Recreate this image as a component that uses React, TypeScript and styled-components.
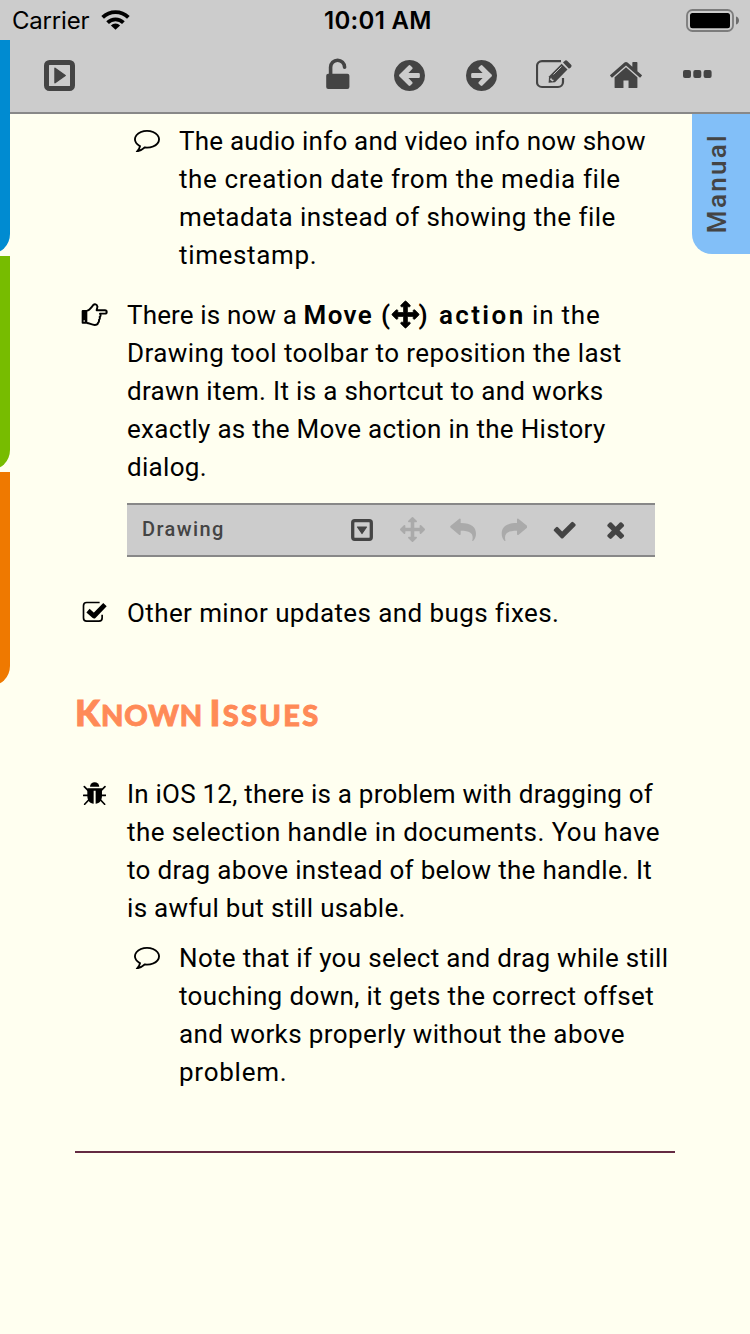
import React from 'react';
import styled, { createGlobalStyle, css } from 'styled-components';

const ink = '#444';
const paper = '#fffff0';
const chrome = '#ccc';
const edge = '#888';

const GlobalStyle = createGlobalStyle`
  * { box-sizing: border-box; }
  body {
    margin: 0;
    background: ${paper};
    color: #000;
    font-family: Roboto, 'Liberation Sans', sans-serif;
  }
  svg { display: block; flex: none; }
`;

const Screen = styled.div`
  position: relative;
  display: flex;
  flex-direction: column;
  width: 750px;
  height: 1334px;
  overflow: hidden;
  background: ${paper};
`;

const StatusBar = styled.header`
  display: grid;
  grid-template-columns: 324px 1fr auto;
  align-items: center;
  height: 40px;
  padding-right: 11px;
  background: ${chrome};
  font: 400 24px/38px Inter, 'Liberation Sans', sans-serif;
`;

const Carrier = styled.div`
  display: flex;
  align-items: center;
  gap: 12px;
  padding: 2px 0 0 12px;
  letter-spacing: -0.2px;
  svg { margin-top: -2px; }
`;

const Clock = styled.div`
  padding-top: 2px;
  font-weight: 600;
  letter-spacing: 0.3px;
`;

const Toolbar = styled.nav`
  display: flex;
  align-items: center;
  height: 74px;
  padding: 0 17px 2px 23px;
  border-bottom: 2px solid ${edge};
  background: ${chrome};
  color: ${ink};
`;

const ToolButton = styled.button<{ $lift?: number; $right?: number }>`
  display: flex;
  align-items: center;
  justify-content: center;
  width: 72px;
  height: 68px;
  padding: 0 0 ${(p) => p.$lift ?? 0}px ${(p) => p.$right ?? 0}px;
  border: 0;
  background: none;
  color: inherit;
`;

const Spacer = styled.div`
  flex: 1;
`;

const SideTabs = styled.aside`
  position: absolute;
  top: 40px;
  left: 0;
  display: flex;
  flex-direction: column;
  gap: 2px;
  width: 10px;
  overflow: hidden;
`;

const SideTab = styled.div<{ $color: string }>`
  align-self: flex-end;
  width: 40px;
  height: 214px;
  border-bottom-right-radius: 20px;
  background: ${(p) => p.$color};
`;

const ManualTab = styled.div`
  position: absolute;
  top: 114px;
  right: 0;
  display: flex;
  align-items: center;
  justify-content: center;
  width: 58px;
  height: 140px;
  padding: 0 8px 1px 0;
  border-bottom-left-radius: 20px;
  background: #82bff8;
  color: ${ink};
`;

const ManualLabel = styled.span`
  font-size: 26px;
  font-weight: 500;
  line-height: 30px;
  letter-spacing: 2.3px;
  writing-mode: vertical-rl;
  transform: rotate(180deg);
`;

const Page = styled.main`
  display: flex;
  flex-direction: column;
  padding: 8px 75px 0;
`;

const Item = styled.section<{ $nested?: boolean; $top?: number }>`
  display: grid;
  grid-template-columns: 39px 1fr;
  column-gap: 13px;
  margin-top: ${(p) => p.$top ?? 0}px;
  ${(p) => p.$nested && css`margin-left: 52px;`}
`;

const Bullet = styled.div<{ $lift?: number }>`
  display: flex;
  align-items: center;
  justify-content: center;
  height: 38px;
  padding-bottom: ${(p) => p.$lift ?? 0}px;
`;

const Copy = styled.p`
  margin: 0;
  font-size: 26px;
  line-height: 38px;
  white-space: nowrap;
`;

const Line = styled.span<{ $track: number }>`
  display: block;
  height: 38px;
  letter-spacing: ${(p) => p.$track}px;
`;

const Run = styled.span<{ $track: number }>`
  letter-spacing: ${(p) => p.$track}px;
`;

const Strong = styled.strong<{ $track: number }>`
  font-weight: 640;
  letter-spacing: ${(p) => p.$track}px;
`;

const InlineIcon = styled.span`
  display: inline-block;
  width: 27px;
  height: 27px;
  vertical-align: -4px;
  svg { overflow: visible; stroke: currentColor; stroke-width: 50px; }
`;

const DrawingBar = styled.div`
  display: flex;
  align-items: center;
  width: 528px;
  height: 54px;
  margin: 17px 0 0 52px;
  padding: 0 14.500px 1px 15px;
  border-top: 2px solid ${edge};
  border-bottom: 2px solid ${edge};
  background: ${chrome};
  color: ${ink};
`;

const DrawingTitle = styled.span`
  padding-bottom: 1px;
  font-size: 20px;
  font-weight: 500;
  letter-spacing: 1.4px;
`;

const BarButton = styled.button<{ $off?: boolean }>`
  display: flex;
  align-items: center;
  justify-content: center;
  width: 50.6px;
  height: 50px;
  padding: 0;
  border: 0;
  background: none;
  color: ${(p) => (p.$off ? '#aaa' : ink)};
`;

const Heading = styled.h2`
  display: flex;
  align-items: baseline;
  height: 44px;
  margin: 58px 0 0;
  color: #ff8a57;
  font: 900 29px/44px Lato, 'Liberation Sans', sans-serif;
  -webkit-text-stroke: 0.9px #ff8a57;
`;

const Word = styled.span<{ $track: number; $gap?: number }>`
  display: block;
  margin-right: ${(p) => p.$gap ?? 0}px;
  letter-spacing: ${(p) => p.$track}px;
  text-transform: uppercase;
  &::first-letter { font-size: 36px; }
`;

const Rule = styled.hr`
  width: 600px;
  height: 2px;
  margin: 60px 0 0;
  border: 0;
  background: #642b42;
`;

const WifiIcon = () => (
  <svg width="29" height="21.3" viewBox="301 28 88 64">
    <path d="M306 53a56 56 0 0 1 78 0M321 69a34 34 0 0 1 48 0" fill="none" stroke="#000" strokeWidth="11.500" />
    <path d="M345 91l-14-13a19 19 0 0 1 28 0z" />
  </svg>
);

const BatteryIcon = () => (
  <svg width="53" height="23" viewBox="0 0 53 23">
    <rect x="1" y="1" width="46" height="21" rx="5.500" fill="none" stroke="#7c7c7c" strokeWidth="1.800" />
    <rect x="4" y="4" width="40" height="15.200" rx="2.500" />
    <path d="M50 7.500c4 1 4 7 0 8z" fill="#6c6c6c" />
  </svg>
);

const PlayIcon = () => (
  <svg width="31" height="31" viewBox="0 0 31 31">
    <rect x="2.500" y="2.500" width="26" height="26" rx="3" fill="none" stroke="currentColor" strokeWidth="5" />
    <path d="M11 8.300v14.400l10.200-7.200z" fill="currentColor" stroke="currentColor" strokeWidth="1.500" strokeLinejoin="round" />
  </svg>
);

const UnlockIcon = () => (
  <svg width="24" height="31" viewBox="0 0 24 31">
    <rect x="0.200" y="15.800" width="23.200" height="15.200" rx="2" fill="currentColor" />
    <path d="M4.600 17V9.200a7 7 0 0 1 14 0" fill="none" stroke="currentColor" strokeWidth="3.600" strokeLinecap="round" />
  </svg>
);

const CircleArrowIcon = ({ right }: { right?: boolean }) => (
  <svg width="31" height="31" viewBox="128 128 1536 1536">
    <path
      transform={right ? 'translate(1792 0) scale(-1 1)' : undefined}
      fill="currentColor"
      d="M1408 960v-128q0-26-19-45t-45-19h-502l189-189q19-19 19-45t-19-45l-91-91q-18-18-45-18t-45 18l-362 362-91 91q-18 18-18 45t18 45l91 91 362 362q18 18 45 18t45-18l91-91q18-18 18-45t-18-45l-189-189h502q26 0 45-19t19-45zm256-64q0 209-103 385.500t-279.500 279.500-385.500 103-385.500-103-279.500-279.500-103-385.500 103-385.500 279.500-279.500 385.500-103 385.500 103 279.500 279.500 103 385.500z"
    />
  </svg>
);

const EditIcon = () => (
  <svg width="36" height="29" viewBox="0 0 36 29">
    <path d="M25 1.100H6A5 5 0 0 0 1 6v16a5 5 0 0 0 5 5h16a5 5 0 0 0 5-5v-4" fill="none" stroke="currentColor" strokeWidth="2.200" />
    <path d="M12.600 22.700l.5-6.500L25.600 3.700l5.900 5.900L19 22.200z" fill="currentColor" />
    <path d="M27 2.500l1.600-1.600a2 2 0 0 1 2.800 0l3.500 3.500a2 2 0 0 1 0 2.800L33 8.700z" fill="currentColor" />
    <path d="M17.500 14.500l8-8" stroke="#ccc" strokeWidth="0.900" />
    <path d="M15 17.500l1 2 2 .6-1.500 1.400-2.500-1.800z" fill="#ccc" />
  </svg>
);

const HomeIcon = () => (
  <svg width="32" height="26.500" viewBox="88 253 1616 1283" preserveAspectRatio="none">
    <path
      fill="currentColor"
      d="M1472 992v480q0 26-19 45t-45 19h-384v-384h-256v384h-384q-26 0-45-19t-19-45v-480q0-1 .5-3t.5-3l575-474 575 474q1 2 1 6zm223-69l-62 74q-8 9-21 11h-3q-13 0-21-7l-692-577-692 577q-12 8-24 7-13-2-21-11l-62-74q-8-10-7-23.500t11-21.500l719-599q32-26 76-26t76 26l244 204v-195q0-14 9-23t23-9h192q14 0 23 9t9 23v408l219 182q10 8 11 21.500t-7 23.500z"
    />
  </svg>
);

const MoreIcon = () => (
  <svg width="29" height="8" viewBox="0 0 29 8" fill="currentColor">
    <rect width="8" height="8" rx="2" />
    <rect x="10.300" width="8" height="8" rx="2" />
    <rect x="20.600" width="8" height="8" rx="2" />
  </svg>
);

const CommentIcon = () => (
  <svg width="26" height="22.300" viewBox="0 256 1792 1536">
    <path d="M896 384q-204 0-381.500 69.500t-282 187.500-104.500 255q0 112 71.500 213.500t201.500 175.500l87 50-27 96q-24 91-70 172 152-63 275-171l43-38 57 6q69 8 130 8 204 0 381.500-69.500t282-187.500 104.500-255-104.500-255-282-187.500-381.500-69.500zm896 512q0 174-120 321.500t-326 233-450 85.500q-70 0-145-8-198 175-460 242-49 14-114 22h-5q-15 0-27-10.500t-16-27.500v-1q-3-4-.5-12t2-10 4.500-9.500l6-9 7-8.500 8-9q7-8 31-34.500t34.500-38 31-39.500 32.500-51 27-59 26-76q-157-89-247.500-220t-90.500-281q0-174 120-321.500t326-233 450-85.500 450 85.500 326 233 120 321.500z" />
  </svg>
);

const HandIcon = () => (
  <svg width="27.300" height="23.300" viewBox="62 549 82 70">
    <path d="M67 570h14v41H67q-3 0-3-3v-35q0-3 3-3z" />
    <circle cx="71.500" cy="603" r="2.500" fill={paper} />
    <path
      d="M80 572c8-1 13-10 19-17 4-4 11-2 12 4 1 4-2 8-2 12h25c7 0 7 10 0 10h-15c3 4 2 8-1 10 2 4 0 7-2 9 1 4-1 7-3 9-1 5-5 6-10 6-8 0-15-5-23-6"
      fill="none"
      stroke="#000"
      strokeWidth="5.800"
      strokeLinejoin="round"
    />
  </svg>
);

const CheckSquareIcon = () => (
  <svg width="25.300" height="21.300" viewBox="244 33 76 64" fill="none" stroke="#000">
    <path d="M297 37.500H258a9.500 9.500 0 0 0-9.500 9.500v37a9.500 9.500 0 0 0 9.500 9.500h37a9.500 9.500 0 0 0 9.500-9.500V74" strokeWidth="5" />
    <path d="M262 62l18 16 33-34" strokeWidth="14.500" strokeLinejoin="round" />
  </svg>
);

const BugIcon = () => (
  <svg width="23.300" height="23.300" viewBox="248 574 70 70">
    <path d="M269 588a14 13 0 0 1 28 0z" />
    <path d="M261 593h44v22c0 15-8 23-19 24v-39h-6v39c-11-1-19-9-19-24z" />
    <path d="M252 588l11 11M250 614h13M253 641l12-13M314 588l-11 11M316 614h-13M313 641l-12-13" stroke="#000" strokeWidth="5" strokeLinecap="round" />
  </svg>
);

const MoveIcon = ({ size }: { size: number }) => (
  <svg width={size} height={size} viewBox="0 0 1792 1792">
    <path
      fill="currentColor"
      d="M1792 896q0 26-19 45l-256 256q-19 19-45 19t-45-19-19-45v-128h-384v384h128q26 0 45 19t19 45-19 45l-256 256q-19 19-45 19t-45-19l-256-256q-19-19-19-45t19-45 45-19h128v-384h-384v128q0 26-19 45t-45 19-45-19l-256-256q-19-19-19-45t19-45l256-256q19-19 45-19t45 19 19 45v128h384v-384h-128q-26 0-45-19t-19-45 19-45l256-256q19-19 45-19t45 19l256 256q19 19 19 45t-19 45-45 19h-128v384h384v-128q0-26 19-45t45-19 45 19l256 256q19 19 19 45z"
    />
  </svg>
);

const MenuIcon = () => (
  <svg width="22" height="22" viewBox="0 0 22 22">
    <rect x="1.700" y="1.700" width="18.600" height="18.600" rx="2" fill="none" stroke="currentColor" strokeWidth="3.300" />
    <path d="M6.500 8h9L11 14.500z" fill="currentColor" stroke="currentColor" strokeWidth="1.200" strokeLinejoin="round" />
  </svg>
);

const UndoIcon = ({ flip }: { flip?: boolean }) => (
  <svg width="26.700" height="23.300" viewBox="361 82 80 70">
    <path
      transform={flip ? 'translate(802 0) scale(-1 1)' : undefined}
      fill="currentColor"
      d="M363 105l26-21c2-1 4 0 4 2v11c33 0 46 13 46 32 0 8-3 16-8 21-2 2-4 1-3-1 4-19-3-29-35-29v11c0 2-2 3-4 2l-26-22c-2-2-2-4 0-6z"
    />
  </svg>
);

const CheckIcon = () => (
  <svg width="25.400" height="25.400" viewBox="0 0 1792 1792">
    <path fill="currentColor" d="M1671 566q0 40-28 68l-724 724-136 136q-28 28-68 28t-68-28l-136-136-362-362q-28-28-28-68t28-68l136-136q28-28 68-28t68 28l294 295 656-657q28-28 68-28t68 28l136 136q28 28 28 68z" />
  </svg>
);

const CloseIcon = () => (
  <svg width="25.400" height="25.400" viewBox="0 0 1792 1792">
    <path fill="currentColor" d="M1490 1322q0 40-28 68l-136 136q-28 28-68 28t-68-28l-294-294-294 294q-28 28-68 28t-68-28l-136-136q-28-28-28-68t28-68l294-294-294-294q-28-28-28-68t28-68l136-136q28-28 68-28t68 28l294 294 294-294q28-28 68-28t68 28l136 136q28 28 28 68t-28 68l-294 294 294 294q28 28 28 68z" />
  </svg>
);

export default function App() {
  return (
    <Screen>
      <GlobalStyle />
      <StatusBar>
        <Carrier>Carrier <WifiIcon /></Carrier>
        <Clock>10:01 AM</Clock>
        <BatteryIcon />
      </StatusBar>
      <Toolbar>
        <ToolButton aria-label="Play"><PlayIcon /></ToolButton>
        <Spacer />
        <ToolButton aria-label="Unlock" $lift={4} $right={1.5}><UnlockIcon /></ToolButton>
        <ToolButton aria-label="Back"><CircleArrowIcon /></ToolButton>
        <ToolButton aria-label="Forward"><CircleArrowIcon right /></ToolButton>
        <ToolButton aria-label="Edit" $lift={1} $right={2}><EditIcon /></ToolButton>
        <ToolButton aria-label="Home" $right={1}><HomeIcon /></ToolButton>
        <ToolButton aria-label="More" $lift={2}><MoreIcon /></ToolButton>
      </Toolbar>
      <Page>
        <Item $nested>
          <Bullet><CommentIcon /></Bullet>
          <Copy>
            <Line $track={0.22}>The audio info and video info now show</Line>
            <Line $track={0.6}>the creation date from the media file</Line>
            <Line $track={0.42}>metadata instead of showing the file</Line>
            <Line $track={0.65}>timestamp.</Line>
          </Copy>
        </Item>
        <Item $top={22}>
          <Bullet><HandIcon /></Bullet>
          <Copy>
            <Line $track={0}>
              <Run $track={0.15}>There is now a</Run>{' '}
              <Strong $track={1.4}>Move (</Strong>
              <InlineIcon><MoveIcon size={27} /></InlineIcon>
              <Strong $track={2.4}>) action</Strong>{' '}
              <Run $track={0.8}>in the</Run>
            </Line>
            <Line $track={0.42}>Drawing tool toolbar to reposition the last</Line>
            <Line $track={0.32}>drawn item. It is a shortcut to and works</Line>
            <Line $track={0.3}>exactly as the Move action in the History</Line>
            <Line $track={0.3}>dialog.</Line>
          </Copy>
        </Item>
        <DrawingBar>
          <DrawingTitle>Drawing</DrawingTitle>
          <Spacer />
          <BarButton aria-label="Menu"><MenuIcon /></BarButton>
          <BarButton aria-label="Move" $off><MoveIcon size={25} /></BarButton>
          <BarButton aria-label="Undo" $off><UndoIcon /></BarButton>
          <BarButton aria-label="Redo" $off><UndoIcon flip /></BarButton>
          <BarButton aria-label="Accept"><CheckIcon /></BarButton>
          <BarButton aria-label="Close"><CloseIcon /></BarButton>
        </DrawingBar>
        <Item $top={37}>
          <Bullet $lift={2}><CheckSquareIcon /></Bullet>
          <Copy><Line $track={0.4}>Other minor updates and bugs fixes.</Line></Copy>
        </Item>
        <Heading>
          <Word $track={0.9} $gap={6.5}>Known</Word>
          <Word $track={2.3}>Issues</Word>
        </Heading>
        <Item $top={41}>
          <Bullet $lift={1}><BugIcon /></Bullet>
          <Copy>
            <Line $track={0.22}>In iOS 12, there is a problem with dragging of</Line>
            <Line $track={0.44}>the selection handle in documents. You have</Line>
            <Line $track={0.32}>to drag above instead of below the handle. It</Line>
            <Line $track={0.31}>is awful but still usable.</Line>
          </Copy>
        </Item>
        <Item $nested $top={12}>
          <Bullet><CommentIcon /></Bullet>
          <Copy>
            <Line $track={0.33}>Note that if you select and drag while still</Line>
            <Line $track={0.37}>touching down, it gets the correct offset</Line>
            <Line $track={0.4}>and works properly without the above</Line>
            <Line $track={0.75}>problem.</Line>
          </Copy>
        </Item>
        <Rule />
      </Page>
      <SideTabs>
        <SideTab $color="#008bd1" />
        <SideTab $color="#77bc00" />
        <SideTab $color="#ef7900" />
      </SideTabs>
      <ManualTab><ManualLabel>Manual</ManualLabel></ManualTab>
    </Screen>
  );
}
